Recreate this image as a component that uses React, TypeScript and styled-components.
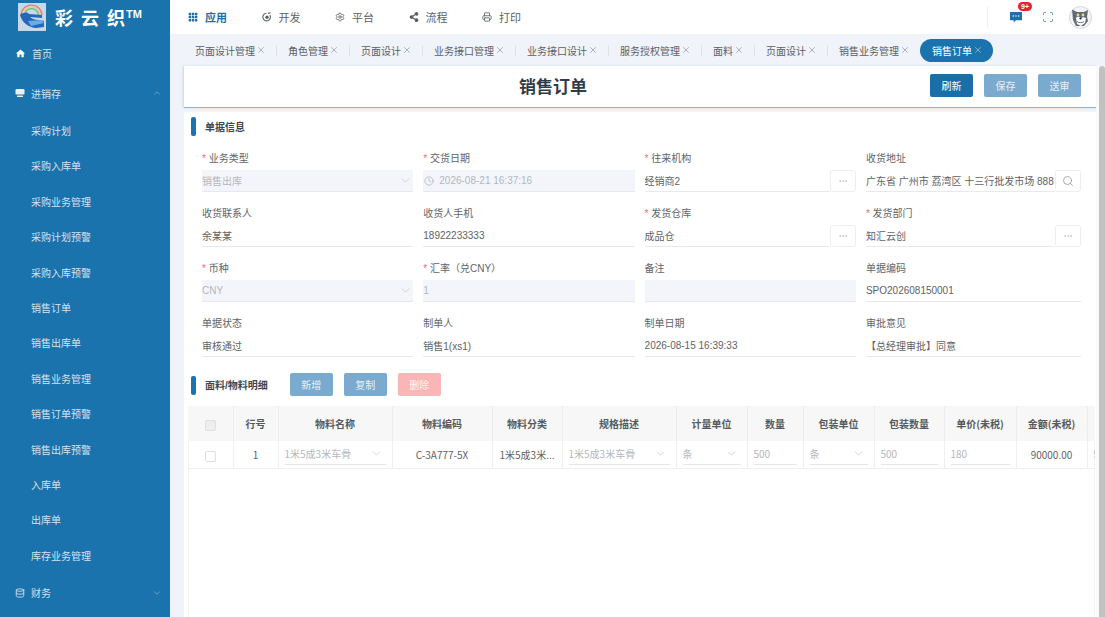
import React from "react";
import styled, { createGlobalStyle } from "styled-components";
import { BsGrid3X3GapFill } from "react-icons/bs";
import { FaShareAlt } from "react-icons/fa";
import { MdHome } from "react-icons/md";
import {
  ChevronDown,
  ChevronUp,
  Clock,
  Database,
  Ellipsis,
  Printer,
  Scan,
  Search,
  Settings,
  X,
} from "lucide-react";

const BLUE = "#1b73ad";
const FONT = `"Liberation Sans", "Noto Sans CJK SC", sans-serif`;
const TABLE_FONT = `"Noto Sans CJK SC", "Liberation Sans", sans-serif`;

// Global
const Global = createGlobalStyle`
  html, body { margin: 0; padding: 0; height: 100%; overflow: hidden; }
  body { font-family: ${FONT}; font-size: 10px; color: #606266; background: #fff; }
  #root { height: 100%; }
  * { box-sizing: border-box; }
`;

const Page = styled.div`
  display: flex;
  height: 617px;
  overflow: hidden;
`;

// Sidebar
const Side = styled.aside`
  width: 170px;
  flex: none;
  background: ${BLUE};
  color: rgba(255, 255, 255, 0.82);
`;

const Brand = styled.div`
  height: 34px;
  display: flex;
  align-items: center;
  gap: 9px;
  padding-left: 18px;
`;

const BrandName = styled.div`
  display: flex;
  align-items: center;
  gap: 8px;
  color: #fff;
  font-size: 18px;
  font-weight: 700;
  white-space: nowrap;
`;

const BrandMark = styled.span`
  font-size: 11px;
  margin: -6px 0 0 -7px;
`;

const MenuRow = styled.div`
  height: 39.5px;
  display: flex;
  align-items: center;
  gap: 6px;
  padding: 0 8px 0 15px;
  font-size: 10px;

  span {
    flex: 1;
  }
`;

const SubMenu = styled.div`
  padding-top: 1px;
  margin-bottom: -1px;
`;

const SubRow = styled.div`
  height: 35.4px;
  line-height: 35.4px;
  padding-left: 31px;
  font-size: 10px;
`;

// Main column
const Main = styled.div`
  flex: 1;
  min-width: 0;
  display: flex;
  flex-direction: column;
  background: #f0f3f9;
`;

const Header = styled.header`
  height: 34px;
  flex: none;
  background: #fff;
  display: flex;
  align-items: center;
  padding-left: 18px;
`;

const NavItem = styled.div<{ $active?: boolean }>`
  width: 73.5px;
  display: flex;
  align-items: center;
  gap: 7px;
  font-size: 11px;
  font-weight: ${(p) => (p.$active ? 700 : 400)};
  color: ${(p) => (p.$active ? "#1f6fa8" : "#5c6066")};

  svg {
    flex: none;
  }
`;

const HeaderRight = styled.div`
  margin-left: auto;
  display: flex;
  align-items: center;
  height: 22px;
  border-left: 1px solid #eef0f3;
  padding-right: 13px;
`;

const MsgWrap = styled.div`
  position: relative;
  margin-left: 22px;
  width: 12px;
  height: 12px;
  color: #1f6fa8;
`;

const Badge = styled.div`
  position: absolute;
  left: 8px;
  top: -9px;
  width: 14px;
  height: 9px;
  border-radius: 5px;
  background: #e8212f;
  color: #fff;
  font-size: 7px;
  font-weight: 700;
  line-height: 9px;
  text-align: center;
`;

const FullBtn = styled.div`
  margin: 0 15px 0 20px;
  display: flex;
  color: #4f93c6;
`;

const Tabs = styled.nav`
  height: 28px;
  flex: none;
  display: flex;
  align-items: center;
  padding: 4px 0 0 13px;
`;

const Tab = styled.div<{ $active?: boolean }>`
  height: 23px;
  display: flex;
  align-items: center;
  white-space: nowrap;
  font-size: 10px;
  gap: 1px;
  padding: 0 10px 0 12px;
  color: ${(p) => (p.$active ? "#fff" : "#5c6066")};
  background: ${(p) => (p.$active ? BLUE : "transparent")};
  border-radius: ${(p) => (p.$active ? "12px" : "0")};
  position: relative;

  & + &::before {
    content: "";
    display: ${(p) => (p.$active ? "none" : "block")};
    position: absolute;
    left: 0;
    top: 6px;
    height: 11px;
    width: 1px;
    background: #dfe2e8;
  }

  svg {
    flex: none;
    opacity: 0.85;
  }
`;

const Body = styled.div`
  flex: 1;
  min-height: 0;
  display: flex;
  padding: 4px 0 0 14px;
`;

const Content = styled.div`
  flex: 1;
  min-width: 0;
  display: flex;
  flex-direction: column;
  gap: 4px;
`;

const ScrollTrack = styled.div`
  width: 9px;
  flex: none;
  display: flex;
  justify-content: flex-end;
  background: #fafafa;
`;

const Thumb = styled.div`
  width: 6px;
  height: 100%;
  background: #c1c1c1;
  border-radius: 3px 3px 0 0;
`;

const TitleCard = styled.div`
  height: 42px;
  flex: none;
  position: relative;
  background: #fff;
  border-bottom: 1.5px solid #8db8da;
  box-shadow: -1px 0 2px rgba(120, 160, 200, 0.35);
  display: flex;
  align-items: center;
  justify-content: flex-end;
  gap: 11px;
  padding: 0 15px 2px 0;
`;

const Title = styled.h1`
  position: absolute;
  left: 0;
  right: 174px;
  top: 10px;
  margin: 0;
  text-align: center;
  font-size: 17px;
  line-height: 24px;
  font-weight: 700;
  color: #303b47;
  pointer-events: none;
`;

const Btn = styled.button<{ $tone: "primary" | "muted" | "danger" }>`
  width: 43px;
  height: 23px;
  border: 0;
  border-radius: 2px;
  padding: 0;
  font-family: ${FONT};
  font-size: 10px;
  color: ${(p) => (p.$tone === "primary" ? "#fff" : "rgba(255,255,255,0.85)")};
  background: ${(p) =>
    p.$tone === "primary"
      ? "#1a6fa8"
      : p.$tone === "muted"
        ? "#7aabcf"
        : "#fab6b7"};
`;

const Panel = styled.section`
  flex: 1;
  min-height: 0;
  background: #fff;
  display: flex;
  flex-direction: column;
  padding: 4px 0 0 4px;
`;

const SectionHead = styled.div`
  height: 20px;
  flex: none;
  display: flex;
  align-items: center;
  padding: 1px 0 0 3px;
  font-size: 10px;
  font-weight: 700;
  color: #3d4650;

  &::before {
    content: "";
    width: 5px;
    height: 19px;
    margin: -1px 9px 0 0;
    border-radius: 2px;
    background: ${BLUE};
  }
`;

const ToolHead = styled(SectionHead)`
  height: 23px;
  margin-top: 2.8px;
  padding-top: 0;

  &::before {
    margin-top: 1px;
  }
`;

const ToolBtns = styled.div`
  display: flex;
  gap: 11px;
  margin-left: 22px;
`;

const FormGrid = styled.div`
  display: grid;
  grid-template-columns: repeat(3, 211.3px) 215px;
  column-gap: 10px;
  padding: 14px 0 0 14px;
`;

const Field = styled.div`
  height: 55.1px;
  min-width: 0;
`;

const Label = styled.div<{ $required?: boolean }>`
  height: 20px;
  line-height: 18px;
  font-size: 10px;
  color: #5f6368;
  white-space: nowrap;

  &::before {
    content: "* ";
    display: ${(p) => (p.$required ? "inline" : "none")};
    color: #f56c6c;
  }
`;

const InputLine = styled.div`
  display: flex;
  height: 22px;
`;

const Value = styled.div<{ $disabled?: boolean; $date?: boolean }>`
  flex: 1;
  min-width: 0;
  display: flex;
  align-items: center;
  gap: 5px;
  padding: 0 1px;
  padding-left: ${(p) => (p.$date ? "1px" : "0")};
  background: ${(p) => (p.$disabled ? "#f3f5fa" : "#fff")};
  color: ${(p) => (p.$disabled ? "#b4b7bd" : "#606266")};
  border-bottom: 1px solid #e7e9ee;
  font-size: 10px;
  white-space: nowrap;
  overflow: hidden;

  span {
    flex: 1;
    overflow: hidden;
  }

  svg {
    flex: none;
    color: #b4b8bf;
  }
`;

const Addon = styled.div`
  width: 26px;
  flex: none;
  display: flex;
  align-items: center;
  justify-content: center;
  border: 1px solid #eceef2;
  border-radius: 3px;
  color: #b8bbc2;
`;

const SearchAddon = styled(Addon)`
  color: #85898f;
`;

const TableWrap = styled.div`
  flex: 1;
  min-height: 0;
  margin: 10px 1px 0 0;
  overflow: hidden;
  box-shadow: inset 1px 0 #f2f2f2, inset -1px 0 #f2f2f2;
`;

const Grid = styled.table`
  table-layout: fixed;
  border-collapse: collapse;
  width: 958px;
  font-family: ${TABLE_FONT};
  font-size: 10px;
`;

const Th = styled.th`
  height: 35px;
  padding: 0;
  background: #f7f7f7;
  border-right: 1px solid #ededed;
  font-weight: 700;
  color: #555a60;
  text-align: center;
`;

const Td = styled.td`
  height: 27px;
  padding: 0;
  border-right: 1px solid #efefef;
  border-bottom: 1px solid #efefef;
  color: #606266;
  text-align: center;
  white-space: nowrap;
  overflow: hidden;
`;

const Check = styled.span<{ $filled?: boolean }>`
  display: inline-block;
  vertical-align: middle;
  width: 11px;
  height: 11px;
  border: 1px solid #dcdfe6;
  border-radius: 2px;
  background: ${(p) => (p.$filled ? "#eeeeee" : "#fff")};
`;

const CellInput = styled.div`
  height: 21px;
  margin: 0 6px;
  display: flex;
  align-items: center;
  justify-content: space-between;
  border-bottom: 1px solid #e6e6e6;
  color: #b4b7bd;
  text-align: left;

  svg {
    color: #b4b8bf;
    margin-right: 3px;
  }
`;

// Drawings
const Logo = () => (
  <svg width="28" height="28" viewBox="0 0 28 28">
    <rect width="28" height="28" fill="#c9d8e6" />
    <path d="M3 13a10.5 10.5 0 0 1 21-1" fill="none" stroke="#e2786c" strokeWidth="1.2" />
    <path d="M4.8 13a8.7 8.7 0 0 1 17.4-1" fill="none" stroke="#e8d06a" strokeWidth="1.2" />
    <path d="M6.6 13a6.9 6.9 0 0 1 13.8-1" fill="none" stroke="#6dbb7c" strokeWidth="1.2" />
    <path d="M2 12c4-3 7-3 9-1l13 1v3l-12-1c2 2 5 3 9 3l5 1v6l-8 1C12 25 4 20 2 12z" fill="#2468bc" />
    <path d="M10 18l14-1 2 3-13 3z" fill="#6cabe4" />
  </svg>
);

const MonitorIcon = () => (
  <svg width="10" height="10" viewBox="0 0 10 10" fill="#fff" opacity="0.9">
    <rect x="0.5" y="1" width="9" height="5.6" rx="1.2" />
    <rect x="2" y="7.4" width="6" height="1.6" rx="0.6" />
  </svg>
);

const DevIcon = () => (
  <svg width="10" height="10" viewBox="0 0 10 10" fill="none" stroke="#5c6066" strokeWidth="1.1">
    <path d="M7.8 3A3.8 3.8 0 1 1 4.4 1.3" />
    <circle cx="5" cy="5.2" r="1.7" fill="#5c6066" stroke="none" />
    <path d="M6 1.4 8.6 .8" />
  </svg>
);

const MessageIcon = () => (
  <svg width="12" height="12" viewBox="0 0 13 13">
    <path d="M0 1h13v9H6.5L4 12.5V10H0z" fill="#1f6fa8" />
    <circle cx="3.6" cy="5.5" r=".8" fill="#fff" />
    <circle cx="6.5" cy="5.5" r=".8" fill="#fff" />
    <circle cx="9.4" cy="5.5" r=".8" fill="#fff" />
  </svg>
);

const Avatar = () => (
  <svg width="23" height="23" viewBox="0 0 23 23">
    <circle cx="11.5" cy="11.5" r="11" fill="#f4f4f4" stroke="#d8d8d8" />
    <path d="M3 3.5l5 2.5h7l4-2-1 7 1 4-4 5H7l-3-6z" fill="#5f6b78" />
    <path d="M7 12c2-2 3-1 5 0 2-1 3-1 5 0l-1 5-4 3-4-2z" fill="#fff" />
    <circle cx="9" cy="9" r="1.4" fill="#dfe36c" />
    <circle cx="14" cy="9" r="1.4" fill="#dfe36c" />
    <circle cx="11.5" cy="12.5" r="1.1" fill="#222" />
    <path d="M8 15.5c2 1.5 5 1.5 7 0" fill="none" stroke="#333" strokeWidth=".7" />
  </svg>
);

const Down = () => <ChevronDown size={13} strokeWidth={1.1} />;

// Data
const navs = [
  { label: "应用", icon: <BsGrid3X3GapFill size={10} />, active: true },
  { label: "开发", icon: <DevIcon /> },
  { label: "平台", icon: <Settings size={10} /> },
  { label: "流程", icon: <FaShareAlt size={10} /> },
  { label: "打印", icon: <Printer size={10} /> },
];

const tabs = [
  "页面设计管理",
  "角色管理",
  "页面设计",
  "业务接口管理",
  "业务接口设计",
  "服务授权管理",
  "面料",
  "页面设计",
  "销售业务管理",
];

const subMenu = [
  "采购计划",
  "采购入库单",
  "采购业务管理",
  "采购计划预警",
  "采购入库预警",
  "销售订单",
  "销售出库单",
  "销售业务管理",
  "销售订单预警",
  "销售出库预警",
  "入库单",
  "出库单",
  "库存业务管理",
];

type FieldData = {
  label: string;
  value: string;
  required?: boolean;
  disabled?: boolean;
  kind?: "select" | "date";
  addon?: "more" | "search";
};

const fields: FieldData[] = [
  { label: "业务类型", value: "销售出库", required: true, disabled: true, kind: "select" },
  { label: "交货日期", value: "2026-08-21 16:37:16", required: true, disabled: true, kind: "date" },
  { label: "往来机构", value: "经销商2", required: true, addon: "more" },
  { label: "收货地址", value: "广东省 广州市 荔湾区 十三行批发市场 8889号", addon: "search" },
  { label: "收货联系人", value: "余某某" },
  { label: "收货人手机", value: "18922233333" },
  { label: "发货仓库", value: "成品仓", required: true, addon: "more" },
  { label: "发货部门", value: "知汇云创", required: true, addon: "more" },
  { label: "币种", value: "CNY", required: true, disabled: true, kind: "select" },
  { label: "汇率（兑CNY）", value: "1", required: true, disabled: true },
  { label: "备注", value: "", disabled: true },
  { label: "单据编码", value: "SPO202608150001" },
  { label: "单据状态", value: "审核通过" },
  { label: "制单人", value: "销售1(xs1)" },
  { label: "制单日期", value: "2026-08-15 16:39:33" },
  { label: "审批意见", value: "【总经理审批】同意" },
];

const columns = [
  { title: "行号", width: 45 },
  { title: "物料名称", width: 114 },
  { title: "物料编码", width: 100 },
  { title: "物料分类", width: 70 },
  { title: "规格描述", width: 114 },
  { title: "计量单位", width: 71 },
  { title: "数量", width: 56 },
  { title: "包装单位", width: 71 },
  { title: "包装数量", width: 70 },
  { title: "单价(未税)", width: 72 },
  { title: "金额(未税)", width: 71 },
  { title: "", width: 59 },
];

const App = () => (
  <Page>
    <Global />
    <Side>
      <Brand>
        <Logo />
        <BrandName>
          <span>彩</span>
          <span>云</span>
          <span>织</span>
          <BrandMark>TM</BrandMark>
        </BrandName>
      </Brand>
      <MenuRow>
        <MdHome size={11} color="#fff" />
        <span>首页</span>
      </MenuRow>
      <MenuRow>
        <MonitorIcon />
        <span>进销存</span>
        <ChevronUp size={10} strokeWidth={1} />
      </MenuRow>
      <SubMenu>
        {subMenu.map((item) => (
          <SubRow key={item}>{item}</SubRow>
        ))}
      </SubMenu>
      <MenuRow>
        <Database size={10} />
        <span>财务</span>
        <ChevronDown size={10} strokeWidth={1} />
      </MenuRow>
    </Side>

    <Main>
      <Header>
        {navs.map((n) => (
          <NavItem key={n.label} $active={n.active}>
            {n.icon}
            {n.label}
          </NavItem>
        ))}
        <HeaderRight>
          <MsgWrap>
            <MessageIcon />
            <Badge>9+</Badge>
          </MsgWrap>
          <FullBtn>
            <Scan size={12} />
          </FullBtn>
          <Avatar />
        </HeaderRight>
      </Header>

      <Tabs>
        {tabs.map((t, i) => (
          <Tab key={i}>
            {t}
            <X size={10} strokeWidth={1.2} />
          </Tab>
        ))}
        <Tab $active>
          销售订单
          <X size={10} strokeWidth={1.2} />
        </Tab>
      </Tabs>

      <Body>
        <Content>
          <TitleCard>
            <Title>销售订单</Title>
            <Btn $tone="primary">刷新</Btn>
            <Btn $tone="muted">保存</Btn>
            <Btn $tone="muted">送审</Btn>
          </TitleCard>

          <Panel>
            <SectionHead>单据信息</SectionHead>
            <FormGrid>
              {fields.map((f) => (
                <Field key={f.label}>
                  <Label $required={f.required}>{f.label}</Label>
                  <InputLine>
                    <Value $disabled={f.disabled} $date={f.kind === "date"}>
                      {f.kind === "date" && <Clock size={10} />}
                      <span>{f.value}</span>
                      {f.kind === "select" && <Down />}
                    </Value>
                    {f.addon === "more" && (
                      <Addon>
                        <Ellipsis size={10} />
                      </Addon>
                    )}
                    {f.addon === "search" && (
                      <SearchAddon>
                        <Search size={12} strokeWidth={1.4} />
                      </SearchAddon>
                    )}
                  </InputLine>
                </Field>
              ))}
            </FormGrid>

            <ToolHead>
              面料/物料明细
              <ToolBtns>
                <Btn $tone="muted">新增</Btn>
                <Btn $tone="muted">复制</Btn>
                <Btn $tone="danger">删除</Btn>
              </ToolBtns>
            </ToolHead>

            <TableWrap>
              <Grid>
                <colgroup>
                  <col style={{ width: 45 }} />
                  {columns.map((c, i) => (
                    <col key={i} style={{ width: c.width }} />
                  ))}
                </colgroup>
                <thead>
                  <tr>
                    <Th>
                      <Check $filled />
                    </Th>
                    {columns.map((c, i) => (
                      <Th key={i}>{c.title}</Th>
                    ))}
                  </tr>
                </thead>
                <tbody>
                  <tr>
                    <Td>
                      <Check />
                    </Td>
                    <Td>1</Td>
                    <Td>
                      <CellInput>
                        1米5成3米车骨
                        <Down />
                      </CellInput>
                    </Td>
                    <Td>C-3A777-5X</Td>
                    <Td>1米5成3米...</Td>
                    <Td>
                      <CellInput>
                        1米5成3米车骨
                        <Down />
                      </CellInput>
                    </Td>
                    <Td>
                      <CellInput>
                        条
                        <Down />
                      </CellInput>
                    </Td>
                    <Td>
                      <CellInput>500</CellInput>
                    </Td>
                    <Td>
                      <CellInput>
                        条
                        <Down />
                      </CellInput>
                    </Td>
                    <Td>
                      <CellInput>500</CellInput>
                    </Td>
                    <Td>
                      <CellInput>180</CellInput>
                    </Td>
                    <Td>90000.00</Td>
                    <Td>
                      <CellInput>9</CellInput>
                    </Td>
                  </tr>
                </tbody>
              </Grid>
            </TableWrap>
          </Panel>
        </Content>
        <ScrollTrack>
          <Thumb />
        </ScrollTrack>
      </Body>
    </Main>
  </Page>
);

export default App;
